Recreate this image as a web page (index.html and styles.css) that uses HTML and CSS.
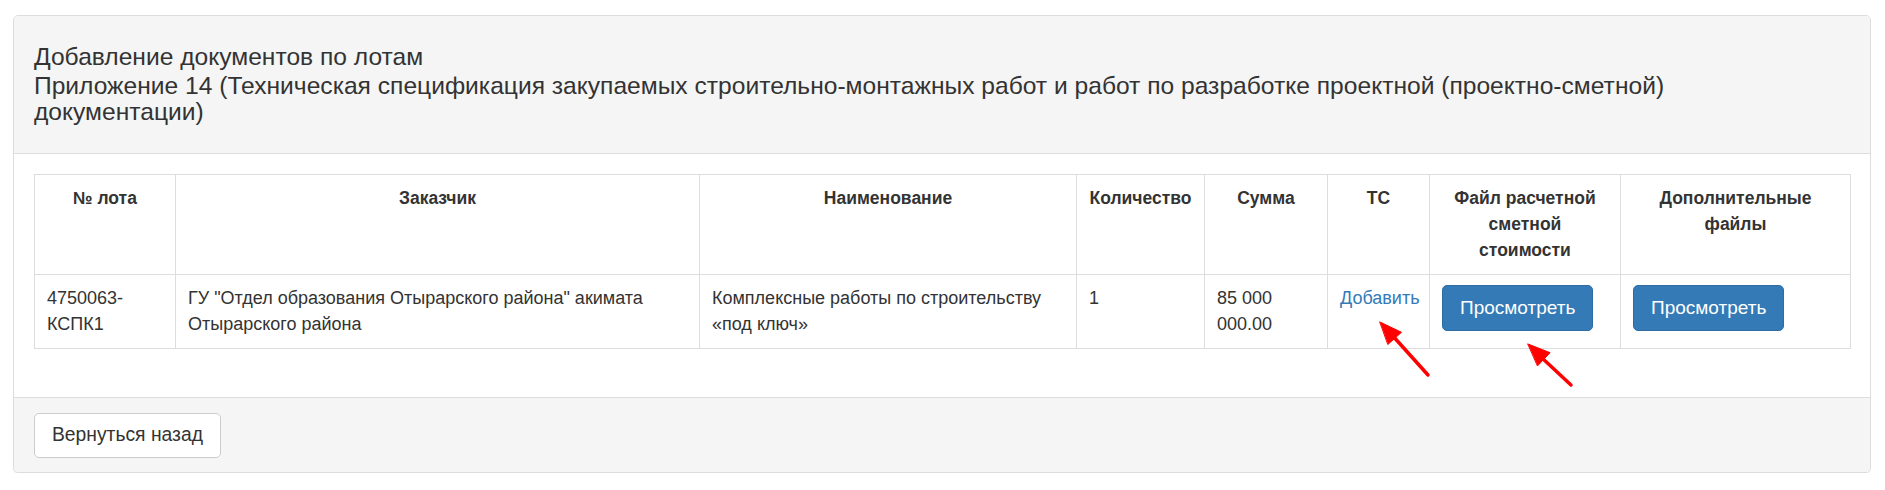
FILE: index.html
```html
<!DOCTYPE html>
<html lang="ru">
<head>
    <meta charset="UTF-8">
    <meta name="viewport" content="width=device-width, initial-scale=1.0">
    <title>Добавление документов по лотам</title>
    <link rel="stylesheet" href="styles.css">
</head>
<body>

    <div class="page">
        <div class="panel">
            <div class="panel-heading">
                <div class="title-main">Добавление документов по лотам</div>
                <div class="title-sub">Приложение 14 (Техническая спецификация закупаемых строительно-монтажных работ и работ по разработке проектной (проектно-сметной) документации)</div>
            </div>

            <div class="panel-body">
                <table class="lots">
                    <colgroup>
                        <col class="col-lot">
                        <col class="col-customer">
                        <col class="col-name">
                        <col class="col-qty">
                        <col class="col-sum">
                        <col class="col-ts">
                        <col class="col-estimate">
                        <col class="col-extra">
                    </colgroup>
                    <thead>
                        <tr>
                            <th>№ лота</th>
                            <th>Заказчик</th>
                            <th>Наименование</th>
                            <th>Количество</th>
                            <th>Сумма</th>
                            <th>ТС</th>
                            <th>Файл расчетной сметной стоимости</th>
                            <th>Дополнительные файлы</th>
                        </tr>
                    </thead>
                    <tbody>
                        <tr>
                            <td>4750063-КСПК1</td>
                            <td>ГУ "Отдел образования Отырарского района" акимата Отырарского района</td>
                            <td>Комплексные работы по строительству «под ключ»</td>
                            <td>1</td>
                            <td>85 000 000.00</td>
                            <td><a href="#" class="link">Добавить</a></td>
                            <td><button class="btn btn-primary">Просмотреть</button></td>
                            <td><button class="btn btn-primary">Просмотреть</button></td>
                        </tr>
                    </tbody>
                </table>
            </div>

            <div class="panel-footer">
                <button class="btn btn-default">Вернуться назад</button>
            </div>
        </div>

        <!-- red annotation arrows drawn over the table -->
        <svg class="annotations" width="1885" height="490" viewBox="0 0 1885 490">
            <g stroke="#f00" stroke-width="3.5" stroke-linecap="round" fill="#f00">
                <line x1="1428" y1="375" x2="1392" y2="335"/>
                <polygon points="1380,322 1401.5,332.3 1388.1,344.3" stroke-width="1" stroke-linejoin="round"/>
                <line x1="1571" y1="385" x2="1541" y2="357"/>
                <polygon points="1528,344 1550.1,352.7 1537.7,365.7" stroke-width="1" stroke-linejoin="round"/>
            </g>
        </svg>
    </div>

</body>
</html>
```

FILE: styles.css
```css
body {
    margin: 0;
    padding: 0;
    font-family: "Liberation Sans", Arial, sans-serif;
    font-size: 18px;
    line-height: 26px;
    color: #333;
    background-color: #fff;
}
.page {
    position: relative;
    padding: 15px 14px 0 13px;
}
.panel {
    border: 1px solid #ddd;
    border-radius: 5px;
    background-color: #fff;
    box-shadow: 0 1px 1px rgba(0, 0, 0, 0.05);
}
.panel-heading {
    background-color: #f5f5f5;
    border-bottom: 1px solid #ddd;
    border-radius: 4px 4px 0 0;
    padding: 28px 40px 27px 20px;
    font-size: 24.6px;
    line-height: 26.4px;
}
.title-main {
    margin-bottom: 2.3px;
}
.panel-body {
    padding: 20px;
}
.panel-footer {
    background-color: #f5f5f5;
    border-top: 1px solid #ddd;
    border-radius: 0 0 4px 4px;
    padding: 15px 20px 14px;
}

/* lots table */
.lots {
    width: 100%;
    table-layout: fixed;
    border-collapse: collapse;
    margin-bottom: 28px;
}
.lots th, .lots td {
    border: 1px solid #ddd;
    padding: 10.5px 12px;
    vertical-align: top;
    text-align: left;
}
.lots th {
    text-align: center;
    font-weight: bold;
    font-size: 17.5px;
}
.col-lot { width: 141px; }
.col-customer { width: 524px; }
.col-name { width: 377px; }
.col-qty { width: 128px; }
.col-sum { width: 123px; }
.col-ts { width: 102px; }
.col-estimate { width: 191px; }
.col-extra { width: 230px; }

.link {
    color: #337ab7;
    text-decoration: none;
}

/* buttons */
.btn {
    font-family: "Liberation Sans", Arial, sans-serif;
    font-size: 19px;
    line-height: 26px;
    padding: 9px 17px;
    border: 1px solid transparent;
    border-radius: 5px;
    cursor: pointer;
}
.btn-primary {
    background-color: #337ab7;
    border-color: #2e6da4;
    color: #fff;
}
.btn-default {
    background-color: #fff;
    border-color: #ccc;
    color: #333;
    padding: 8.5px 17px;
    font-size: 19.3px;
}

.annotations {
    position: absolute;
    top: 0;
    left: 0;
    pointer-events: none;
}
```
